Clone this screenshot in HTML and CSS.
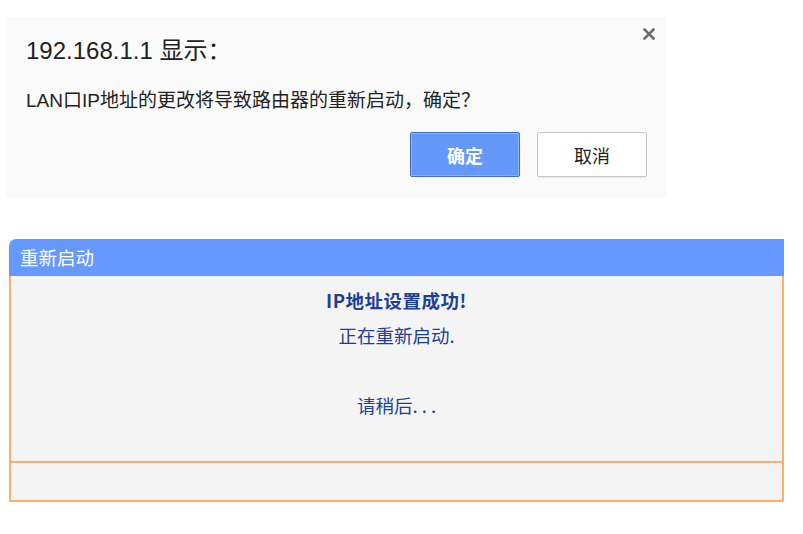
FILE: index.html
```html
<!DOCTYPE html>
<html lang="zh-CN">
<head>
<meta charset="utf-8">
<title>重新启动</title>
<link rel="stylesheet" href="styles.css">
</head>
<body>
<div class="alert">
  <div class="alert-head">
    <div class="alert-title">192.168.1.1 显示：</div>
    <div class="alert-close">
      <svg width="12" height="12" viewBox="0 0 12 12"><path d="M1.5 1.5 L10.5 10.5 M10.5 1.5 L1.5 10.5" stroke="#6b6b6b" stroke-width="2.6" stroke-linecap="square"/></svg>
    </div>
  </div>
  <div class="alert-msg">LAN口IP地址的更改将导致路由器的重新启动，确定？</div>
  <div class="alert-actions">
    <button class="btn btn-primary">确定</button>
    <button class="btn btn-default">取消</button>
  </div>
</div>

<div class="panel">
  <div class="panel-head">重新启动</div>
  <div class="panel-body">
    <div class="line strong">IP地址设置成功!</div>
    <div class="line">正在重新启动.</div>
    <div class="line">&nbsp;</div>
    <div class="line">请稍后. . .</div>
  </div>
  <div class="panel-foot"></div>
</div>
</body>
</html>
```

FILE: styles.css
```css
html, body {
  margin: 0;
  padding: 0;
  background: #ffffff;
}
body {
  font-family: "Liberation Sans", "Noto Sans CJK SC", sans-serif;
  color: #222;
}
.alert {
  margin: 17px 0 0 6px;
  width: 661px;
  height: 180px;
  box-sizing: border-box;
  background: #fafafa;
  padding: 18px 20px 0 20px;
  display: flex;
  flex-direction: column;
}
.alert-head {
  display: flex;
  justify-content: space-between;
  align-items: flex-start;
}
.alert-title {
  font-size: 24px;
  line-height: 32px;
  color: #222;
}
.alert-close {
  margin-top: -7px;
  margin-right: -8px;
  width: 12px;
  height: 12px;
  display: flex;
}
.alert-msg {
  margin-top: 23px;
  font-size: 19px;
  line-height: 22px;
  color: #222;
}
.alert-actions {
  margin-top: 20px;
  display: flex;
  justify-content: flex-end;
  gap: 17px;
}
.btn {
  width: 110px;
  height: 45px;
  box-sizing: border-box;
  font-family: "Noto Sans CJK SC", sans-serif;
  font-size: 18px;
  border-radius: 2px;
  padding: 0;
}
.btn-primary {
  background: #6498f9;
  color: #ffffff;
  border: 1px solid #3d6fd6;
  box-shadow: inset 0 0 0 1px #8cb4fb;
  font-weight: bold;
}
.btn-default {
  background: #ffffff;
  color: #222;
  border: 1px solid #c6c6c6;
  box-shadow: 0 1px 1px rgba(0,0,0,0.08);
}
.panel {
  margin: 42px 0 0 9px;
  width: 775px;
  box-sizing: border-box;
}
.panel-head {
  height: 37px;
  background: #6699ff;
  border-top-left-radius: 7px;
  color: #ffffff;
  font-family: "Noto Sans CJK SC", sans-serif;
  font-size: 18.5px;
  line-height: 37px;
  padding-left: 11px;
}
.panel-body {
  background: #f4f4f4;
  border-left: 2px solid #ffae6a;
  border-right: 2px solid #ffae6a;
  height: 185px;
  box-sizing: border-box;
  padding-top: 7px;
  text-align: center;
  color: #1d3f98;
  font-family: "Noto Sans CJK SC", sans-serif;
  font-size: 18.5px;
}
.line {
  line-height: 35px;
  height: 35px;
}
.strong {
  font-weight: bold;
  font-size: 18.5px;
  letter-spacing: 0.5px;
}
.panel-foot {
  height: 41px;
  box-sizing: border-box;
  background: #f4f4f4;
  border: 2px solid #ffae6a;
}
```
